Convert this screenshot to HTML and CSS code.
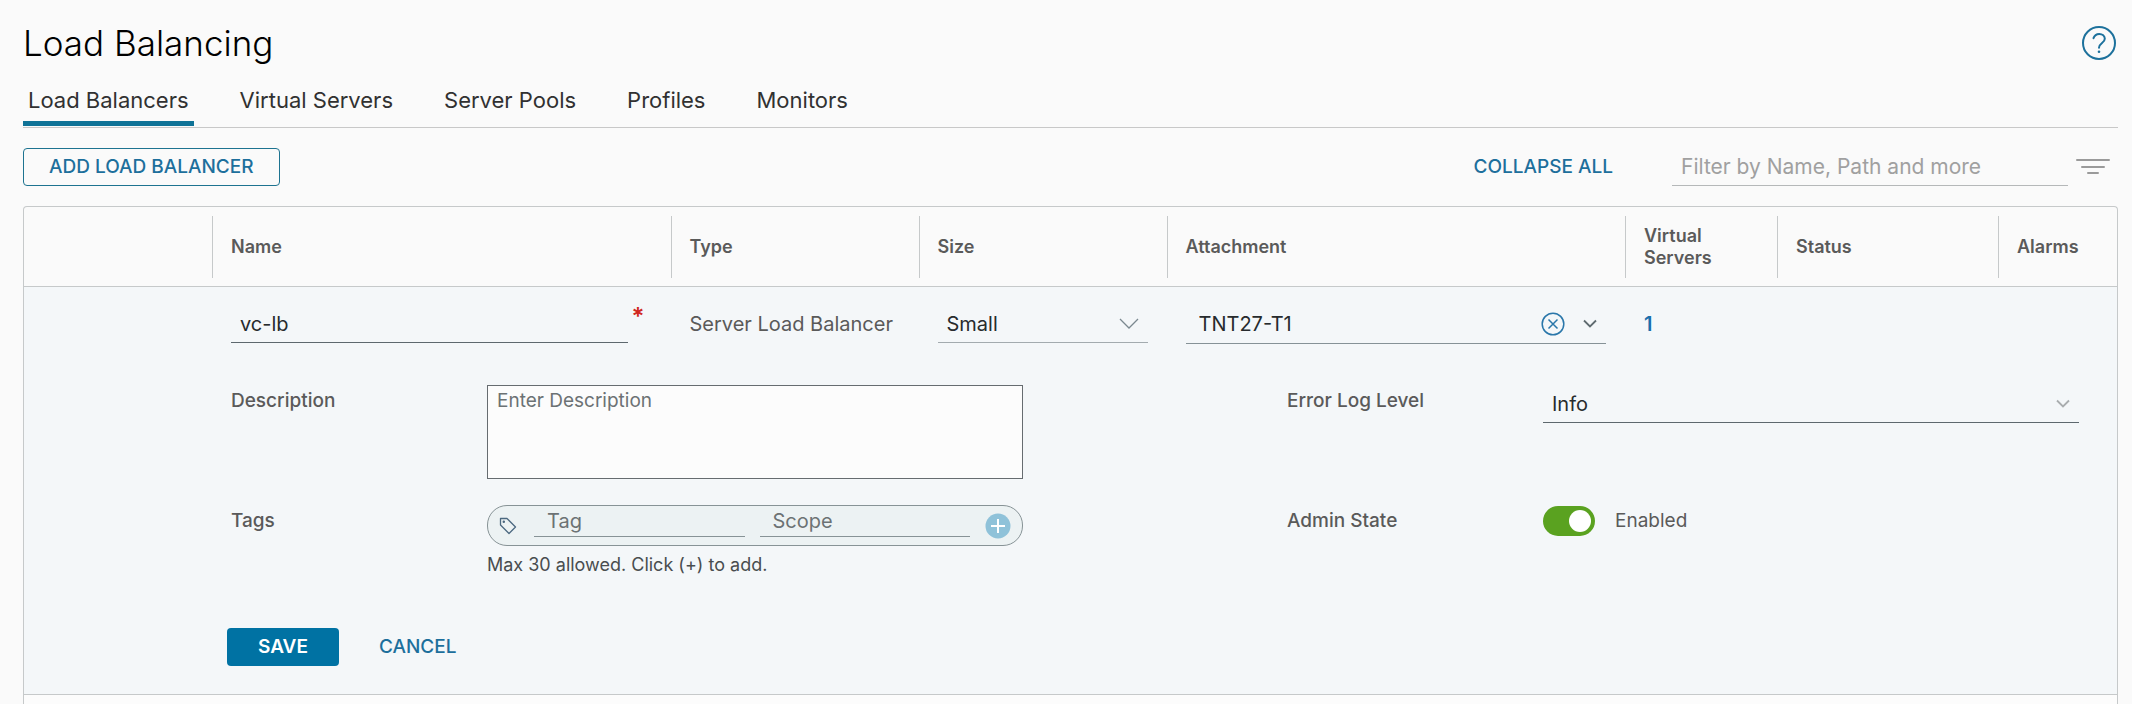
FILE: index.html
```html
<!DOCTYPE html>
<html lang="en">
<head>
<meta charset="utf-8">
<title>Load Balancing</title>
<link rel="stylesheet" href="styles.css">
</head>
<body>
<main class="page">
  <header class="page-header">
    <h1 class="page-title">Load Balancing</h1>
    <button class="icon-button" type="button" aria-label="Help">
      <svg width="36" height="36" viewBox="0 0 36 36" fill="none" stroke="#1d719c" stroke-width="2"><circle cx="18" cy="18" r="16"/><path d="M12.5 13.2c1-2.800 3-4.200 5.700-4.200 3.200 0 5.600 1.900 5.600 4.800 0 4.200-5.800 4.300-5.800 9" stroke-linecap="round"/><circle cx="18" cy="26.800" r="1.300" fill="#1d719c" stroke="none"/></svg>
    </button>
  </header>

  <nav class="tabs">
    <a class="tab tab-active" href="#load-balancers">Load Balancers</a>
    <a class="tab" href="#virtual-servers">Virtual Servers</a>
    <a class="tab" href="#server-pools">Server Pools</a>
    <a class="tab" href="#profiles">Profiles</a>
    <a class="tab" href="#monitors">Monitors</a>
  </nav>

  <div class="toolbar">
    <button class="button button-outline" type="button">ADD LOAD BALANCER</button>
    <div class="toolbar-end">
      <button class="button button-link" type="button">COLLAPSE ALL</button>
      <input class="line-input filter-input" type="text" aria-label="Filter" placeholder="Filter by Name, Path and more">
      <button class="icon-button" type="button" aria-label="Filter options">
        <svg width="34" height="18" viewBox="0 0 34 18" stroke="#9a9a9a" stroke-width="2" stroke-linecap="round"><path d="M1 2h32M6 9h22M12 15h10"/></svg>
      </button>
    </div>
  </div>

  <table class="grid">
    <colgroup>
      <col class="col-actions"><col><col class="col-medium"><col class="col-medium"><col><col class="col-servers"><col class="col-status"><col class="col-alarms">
    </colgroup>
    <thead>
      <tr>
        <td class="head-cell"></td>
        <th class="head-cell" scope="col"><span class="head-text">Name</span></th>
        <th class="head-cell" scope="col"><span class="head-text">Type</span></th>
        <th class="head-cell" scope="col"><span class="head-text">Size</span></th>
        <th class="head-cell" scope="col"><span class="head-text">Attachment</span></th>
        <th class="head-cell" scope="col"><span class="head-text">Virtual Servers</span></th>
        <th class="head-cell" scope="col"><span class="head-text">Status</span></th>
        <th class="head-cell" scope="col"><span class="head-text">Alarms</span></th>
      </tr>
    </thead>
    <tbody>
      <tr class="edit-row">
        <td></td>
        <td class="cell">
          <div class="required-field">
            <input class="line-input" type="text" aria-label="Name" value="vc-lb" required>
            <span class="required-mark">*</span>
          </div>
        </td>
        <td class="cell cell-text">Server Load Balancer</td>
        <td class="cell">
          <div class="select-field select-soft">
            <select class="line-input" aria-label="Size"><option>Small</option></select>
            <svg class="chevron" width="20" height="12" viewBox="0 0 20 12" fill="none" stroke="#7b8990" stroke-width="1.300"><path d="M1 1l9 9 9-9"/></svg>
          </div>
        </td>
        <td class="cell">
          <div class="combo">
            <input class="combo-input" type="text" aria-label="Attachment" value="TNT27-T1">
            <button class="icon-button" type="button" aria-label="Clear attachment">
              <svg width="24" height="24" viewBox="0 0 24 24" fill="none" stroke="#2a77aa" stroke-width="1.500"><circle cx="12" cy="12" r="10.800"/><path d="M7.500 7.500l9 9M16.500 7.500l-9 9"/></svg>
            </button>
            <button class="icon-button" type="button" aria-label="Show attachments">
              <svg width="14" height="10" viewBox="0 0 14 10" fill="none" stroke="#5f6b70" stroke-width="1.800"><path d="M1 1.500l6 6 6-6"/></svg>
            </button>
          </div>
        </td>
        <td class="cell"><a class="count-link" href="#virtual-servers">1</a></td>
        <td></td>
        <td></td>
      </tr>
      <tr class="edit-row">
        <td class="detail-cell" colspan="8">
          <form class="detail">
            <label class="field-label" for="description">Description</label>
            <textarea class="description" id="description" placeholder="Enter Description"></textarea>

            <label class="field-label second-label" for="log-level">Error Log Level</label>
            <div class="select-field log-level">
              <select class="line-input" id="log-level"><option>Info</option></select>
              <svg class="chevron" width="14" height="10" viewBox="0 0 14 10" fill="none" stroke="#a9adaf" stroke-width="1.800"><path d="M1 1.500l6 6 6-6"/></svg>
            </div>

            <label class="field-label" for="tag">Tags</label>
            <div class="tags">
              <div class="tag-pill">
                <svg class="tag-icon" width="18" height="18" viewBox="0 0 18 18" fill="none" stroke="#4c6980" stroke-width="1.300" stroke-linejoin="round"><path d="M1.500 1.500h6.500l8.500 8.500-6.500 6.500-8.500-8.500z"/><circle cx="4.800" cy="4.800" r=".6"/></svg>
                <input class="tag-input" id="tag" type="text" placeholder="Tag">
                <input class="tag-input" type="text" aria-label="Scope" placeholder="Scope">
                <button class="icon-button" type="button" aria-label="Add tag">
                  <svg width="26" height="26" viewBox="0 0 26 26"><circle cx="13" cy="13" r="12.500" fill="#8fc2d9"/><path d="M13 6v14M6 13h14" stroke="#fff" stroke-width="2"/></svg>
                </button>
              </div>
              <p class="hint">Max 30 allowed. Click (+) to add.</p>
            </div>

            <label class="field-label second-label" for="admin-state">Admin State</label>
            <div class="toggle-field">
              <input class="toggle" id="admin-state" type="checkbox" checked>
              <span>Enabled</span>
            </div>

            <div class="form-actions">
              <button class="button button-primary" type="button">SAVE</button>
              <button class="button button-link" type="button">CANCEL</button>
            </div>
          </form>
        </td>
      </tr>
      <tr class="next-row"><td colspan="8"></td></tr>
    </tbody>
  </table>
</main>
</body>
</html>
```
FILE: styles.css
```css
* { box-sizing: border-box; }

body {
  margin: 0;
  background: #fafafa;
  color: #5a5a5a;
  font: 20px/24px Inter, "Liberation Sans", sans-serif;
}

input, select, textarea, button { font: inherit; color: inherit; }

.page { padding: 21px 14px 0 23px; }

.page-header {
  display: flex;
  align-items: center;
  justify-content: space-between;
  height: 44px;
  padding-right: 1px;
}

.page-title {
  margin: 0;
  color: #000;
  font-size: 35px;
  font-weight: 300;
  line-height: 44px;
}

.icon-button {
  display: flex;
  flex: none;
  padding: 0;
  border: 0;
  background: none;
}

.tabs {
  display: flex;
  gap: 41px;
  margin-top: 12px;
  padding-bottom: 1px;
  border-bottom: 1px solid #c8c8c8;
}

.tab {
  padding: 11px 5px 9px;
  border-bottom: 5px solid transparent;
  color: #313131;
  font-size: 22px;
  text-decoration: none;
}

.tab-active { border-bottom-color: #0f7397; }

.toolbar {
  display: flex;
  align-items: center;
  justify-content: space-between;
  margin: 20px 0;
}

.toolbar-end { display: flex; align-items: center; padding-right: 8px; }

.button {
  height: 38px;
  padding: 0 30px;
  border: 1px solid transparent;
  border-radius: 4px;
  background: none;
  color: #1d6f9c;
  font-size: 19px;
  font-weight: 500;
  line-height: 20px;
}

.button-outline { padding: 0 25px; border-color: #1d7390; }
.button-primary { background: #0072a3; color: #fff; font-weight: 600; }
.button-link { padding: 0; }

.line-input {
  width: 100%;
  height: 38px;
  padding: 0 9px;
  border: 0;
  border-bottom: 1px solid #5d686e;
  border-radius: 0;
  background: none;
  color: #272b2d;
}

.filter-input {
  width: 396px;
  margin: 0 8px 0 58px;
  border-color: #b5b8b9;
  font-size: 21px;
}

::placeholder { color: #6c7274; opacity: 1; }
.filter-input::placeholder { color: #a0a0a0; }

.grid {
  width: 100%;
  table-layout: fixed;
  border: 1px solid #c6c9ca;
  border-bottom: 0;
  border-collapse: separate;
  border-spacing: 0;
  border-radius: 4px 4px 0 0;
}

.col-actions { width: 188px; }
.col-medium { width: 248px; }
.col-servers { width: 152px; }
.col-status { width: 221px; }
.col-alarms { width: 119px; }

.head-cell {
  height: 80px;
  padding: 8px 0;
  border-bottom: 1px solid #c6c9ca;
  text-align: left;
  font-size: 18px;
  font-weight: 600;
  line-height: 22px;
}

.head-text {
  display: flex;
  align-items: center;
  height: 62px;
  padding: 0 18px;
  border-left: 1px solid #c6c9ca;
}

.edit-row { background: #f4f7f9; }

.cell { padding: 18px 19px 0; vertical-align: top; }
.cell-text { padding-right: 0; line-height: 38px; white-space: nowrap; }

.required-field { display: flex; gap: 4px; padding-right: 7px; }
.required-mark { color: #d0281e; font-size: 24px; font-weight: 600; }

.select-field { display: grid; align-items: center; }
.select-field > * { grid-area: 1 / 1; }
.select-field select { appearance: none; }
.select-soft select { border-color: #a3abaf; }
.chevron { justify-self: end; margin-right: 9px; pointer-events: none; }

.combo {
  display: flex;
  align-items: center;
  gap: 18px;
  height: 39px;
  padding: 0 9px 0 13px;
  border-bottom: 1px solid #869297;
}

.combo-input {
  flex: 1;
  min-width: 0;
  padding: 0;
  border: 0;
  background: none;
  color: #272b2d;
}

.count-link {
  color: #1a6fac;
  font-weight: 600;
  line-height: 38px;
  text-decoration: none;
}

.detail-cell { padding: 41px 38px 28px 207px; border-bottom: 1px solid #c6c9ca; }

.detail {
  display: grid;
  grid-template-columns: 256px minmax(0, 1fr) 264px 256px minmax(0, 1fr);
  row-gap: 26px;
}

.field-label { padding-top: 4px; font-size: 19px; font-weight: 500; }
.second-label { grid-column: 4; }

.description {
  width: 100%;
  height: 94px;
  padding: 3px 9px;
  border: 1px solid #666c70;
  background: #fcfcfc;
  font-size: 19px;
  resize: none;
}

.log-level { align-self: start; }

.tag-pill {
  display: flex;
  align-items: center;
  gap: 15px;
  height: 41px;
  padding: 0 11px;
  border: 1px solid #879396;
  border-radius: 20px;
  background: #ecf2f3;
}

.tag-icon { margin-right: 2px; flex: none; }

.tag-input {
  flex: 1;
  min-width: 0;
  height: 30px;
  margin-bottom: 8px;
  padding: 0 13px;
  border: 0;
  border-bottom: 1px solid #879396;
  background: none;
}

.hint { margin: 7px 0 0; color: #494d4f; font-size: 18px; }

.toggle-field { display: flex; align-items: center; align-self: start; gap: 20px; height: 32px; font-size: 19px; }

.toggle {
  appearance: none;
  display: flex;
  width: 52px;
  height: 30px;
  margin: 0;
  padding: 4px;
  border-radius: 15px;
  background: #5aa220;
}

.toggle::before {
  width: 22px;
  height: 22px;
  margin-left: auto;
  border-radius: 50%;
  background: #fff;
  content: "";
}

.form-actions { display: flex; grid-column: 1 / -1; gap: 39px; margin: 25px 0 0 -4px; }

.next-row { background: #fcfcfc; }
.next-row td { height: 9px; padding: 0; }
```
